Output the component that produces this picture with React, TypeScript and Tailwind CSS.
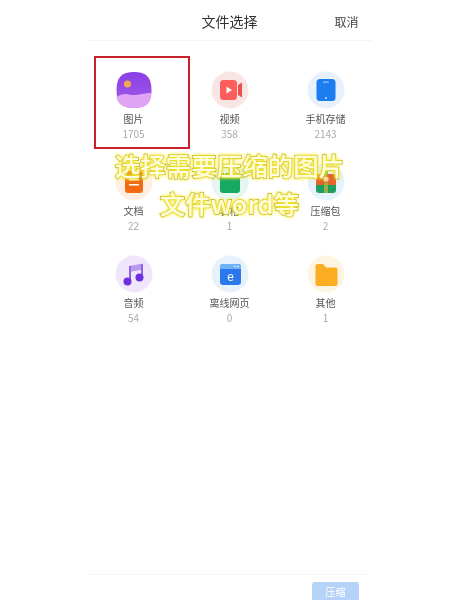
import React from 'react';

function PhotoIcon() {
  return (
    <svg viewBox="0 0 36 36" className="h-[36px] w-[36px]">
      <defs>
        <linearGradient id="photoTop" x1="0" y1="0" x2="0" y2="1">
          <stop offset="0" stopColor="#8b3fe6" />
          <stop offset="1" stopColor="#a45be6" />
        </linearGradient>
      </defs>
      <path d="M18 0C30 0 35.500 5 35.500 18S30 36 18 36 .5 31 .5 18 6 0 18 0Z" fill="url(#photoTop)" />
      <path d="M.5 25c4-2.500 8-4 13-2.500 7 2 13-1.500 22-1.500C35 31 30 36 18 36S1 31 .5 25Z" fill="#dfa4f3" />
      <circle cx="11.500" cy="12" r="3.600" fill="#f0a94e" />
    </svg>
  );
}

function VideoIcon() {
  return (
    <svg viewBox="0 0 38 38" className="h-[38px] w-[38px]">
      <circle cx="19" cy="19" r="18.500" fill="#f9e6e4" />
      <rect x="9" y="9" width="17" height="20" rx="3.500" fill="#fb5f5c" />
      <path d="M27 14l4-2.500v15L27 24Z" fill="#ef4f4f" />
      <path d="M15.500 15.500l5.500 3.500-5.500 3.500Z" fill="#ffffff" />
    </svg>
  );
}

function PhoneIcon() {
  return (
    <svg viewBox="0 0 38 38" className="h-[38px] w-[38px]">
      <circle cx="19" cy="19" r="18.500" fill="#e6f1fb" />
      <rect x="9.500" y="8" width="19" height="22" rx="3.500" fill="#1c7df0" />
      <rect x="16" y="10.500" width="6" height="1.200" rx="0.600" fill="#9cc8fa" />
      <circle cx="19" cy="27" r="1" fill="#cfe5fd" />
    </svg>
  );
}

function DocIcon() {
  return (
    <svg viewBox="0 0 38 38" className="h-[38px] w-[38px]">
      <circle cx="19" cy="19" r="18.500" fill="#fdf0e3" />
      <rect x="10" y="8" width="18" height="22" rx="3" fill="#f26a12" />
      <rect x="14" y="16" width="10" height="1.500" fill="#ffffff" />
      <rect x="14" y="21" width="10" height="1.500" fill="#ffffff" />
    </svg>
  );
}

function TableIcon() {
  return (
    <svg viewBox="0 0 38 38" className="h-[38px] w-[38px]">
      <circle cx="19" cy="19" r="18.500" fill="#e6f6f1" />
      <rect x="9" y="10" width="20" height="20" rx="3" fill="#17a862" />
      <rect x="13" y="10" width="1.500" height="5" fill="#ffffff" />
      <rect x="18.200" y="10" width="1.500" height="5" fill="#ffffff" />
      <rect x="23.500" y="10" width="1.500" height="5" fill="#ffffff" />
    </svg>
  );
}

function ZipIcon() {
  return (
    <svg viewBox="0 0 38 38" className="h-[38px] w-[38px]">
      <circle cx="19" cy="19" r="18.500" fill="#e6f2fc" />
      <path d="M9 14a3 3 0 0 1 3-3h14a3 3 0 0 1 3 3v8H9Z" fill="#e8622c" />
      <path d="M9 22h20v5a3 3 0 0 1-3 3H12a3 3 0 0 1-3-3Z" fill="#1d9e5c" />
      <rect x="17" y="5" width="4" height="25" fill="#8fb04a" />
      <circle cx="19" cy="16" r="3.200" fill="#f6d9a0" stroke="#d9752e" strokeWidth="1.200" />
    </svg>
  );
}

function MusicIcon() {
  return (
    <svg viewBox="0 0 38 38" className="h-[38px] w-[38px]">
      <circle cx="19" cy="19" r="18.500" fill="#efe6fb" />
      <path d="M14 11l14-2.500v6L14 17Z" fill="#b59af0" />
      <path d="M14 11v16h2V11ZM26 9v13h2V9Z" fill="#8f63e6" />
      <circle cx="12.500" cy="26.500" r="4" fill="#6f2fdc" />
      <circle cx="24.500" cy="22.500" r="4" fill="#6f2fdc" />
    </svg>
  );
}

function WebIcon() {
  return (
    <svg viewBox="0 0 38 38" className="h-[38px] w-[38px]">
      <circle cx="19" cy="19" r="18.500" fill="#e6f1fb" />
      <rect x="9" y="9" width="21" height="21" rx="3" fill="#2a78ec" />
      <path d="M9 12a3 3 0 0 1 3-3h15a3 3 0 0 1 3 3v2H9Z" fill="#6fb2f6" />
      <circle cx="24" cy="11.500" r="0.800" fill="#ffffff" />
      <circle cx="27" cy="11.500" r="0.800" fill="#ffffff" />
      <text x="19.500" y="26" textAnchor="middle" fontSize="12" fill="#ffffff" fontFamily="'Liberation Sans', sans-serif">e</text>
    </svg>
  );
}

function FolderIcon() {
  return (
    <svg viewBox="0 0 38 38" className="h-[38px] w-[38px]">
      <circle cx="19" cy="19" r="18.500" fill="#fdf5e2" />
      <path d="M8.500 11a2 2 0 0 1 2-2h5.500l3 3.500h9.500a2 2 0 0 1 2 2V29a2 2 0 0 1-2 2h-18a2 2 0 0 1-2-2Z" fill="#fbae22" />
    </svg>
  );
}

const items = [
  { name: '图片', count: 1705, icon: <PhotoIcon /> },
  { name: '视频', count: 358, icon: <VideoIcon /> },
  { name: '手机存储', count: 2143, icon: <PhoneIcon /> },
  { name: '文档', count: 22, icon: <DocIcon /> },
  { name: '表格', count: 1, icon: <TableIcon /> },
  { name: '压缩包', count: 2, icon: <ZipIcon /> },
  { name: '音频', count: 54, icon: <MusicIcon /> },
  { name: '离线网页', count: 0, icon: <WebIcon /> },
  { name: '其他', count: 1, icon: <FolderIcon /> },
];

export default function App() {
  return (
    <div className="relative mx-auto flex h-[600px] w-[459px] flex-col overflow-hidden bg-white font-['Noto_Sans_CJK_SC',sans-serif] blur-[0.3px]">
      {/* header */}
      <div className="mx-auto flex h-[41px] w-[284px] shrink-0 items-center justify-between border-b border-[#f5f5f5] pt-[3px]">
        <span className="w-[37px]" />
        <h1 className="text-[14px] text-[#333333]">文件选择</h1>
        <button className="mr-[13px] text-[12px] text-[#444444]">取消</button>
      </div>

      {/* file types */}
      <div className="mx-auto mt-[30px] grid w-[288px] grid-cols-3 gap-y-[22px]">
        {items.map(item => (
          <div key={item.name} className="flex h-[70px] flex-col items-center">
            <div className="flex h-[38px] shrink-0 items-center justify-center">{item.icon}</div>
            <span className="mt-[3px] text-[10px] leading-[14px] text-[#555555]">{item.name}</span>
            <span className="text-[10px] leading-[15px] text-[#aaaaaa]">{item.count}</span>
          </div>
        ))}
      </div>

      {/* footer */}
      <div className="ml-[88px] mt-auto flex h-[26px] w-[280px] shrink-0 items-start justify-end border-t border-[#f7f7f7] pt-[7px]">
        <button className="mr-[9px] flex h-[24px] w-[47px] shrink-0 justify-center rounded-[3px] bg-[#b5d3f8] pt-[2px] text-[10px] text-white">压缩</button>
      </div>

      {/* red highlight */}
      <div className="absolute left-[94px] top-[56px] h-[93px] w-[96px] border-2 border-[#c8202c]" />

      {/* caption */}
      <div className="absolute left-0 top-[146px] w-full text-center text-[25.5px] font-medium leading-[38px] text-[#fdfbe0] [-webkit-text-stroke:1.4px_#77752e] [paint-order:stroke_fill] [text-shadow:0_0_2px_#f4e52c,0_0_3px_#f4e52c,0_0_3px_#f4e52c,0_0_4px_#f4e52c]">
        <div>选择需要压缩的图片</div>
        <div>文件word等</div>
      </div>
    </div>
  );
}
